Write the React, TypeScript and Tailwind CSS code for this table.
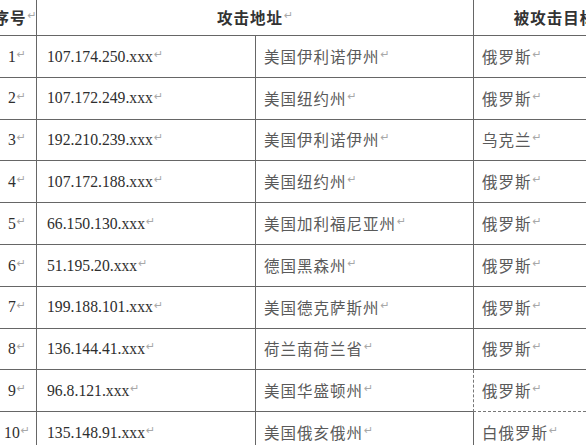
import React from "react";

const rows: [string, string, string, string][] = [
  ["1", "107.174.250.xxx", "美国伊利诺伊州", "俄罗斯"],
  ["2", "107.172.249.xxx", "美国纽约州", "俄罗斯"],
  ["3", "192.210.239.xxx", "美国伊利诺伊州", "乌克兰"],
  ["4", "107.172.188.xxx", "美国纽约州", "俄罗斯"],
  ["5", "66.150.130.xxx", "美国加利福尼亚州", "俄罗斯"],
  ["6", "51.195.20.xxx", "德国黑森州", "俄罗斯"],
  ["7", "199.188.101.xxx", "美国德克萨斯州", "俄罗斯"],
  ["8", "136.144.41.xxx", "荷兰南荷兰省", "俄罗斯"],
  ["9", "96.8.121.xxx", "美国华盛顿州", "俄罗斯"],
  ["10", "135.148.91.xxx", "美国俄亥俄州", "白俄罗斯"],
];

const Mark = () => (
  <span className="ml-[1px] text-[11px] leading-none text-[#a8a8a8] relative top-[-2px] [font-family:'DejaVu_Sans',sans-serif]">
    ↵
  </span>
);

const num = "[font-family:'Liberation_Serif','Noto_Sans_CJK_SC',serif] text-[15.7px] text-[#2e2e2e]";
const cjk = "[font-family:'Noto_Sans_CJK_SC',sans-serif] text-[15.5px] text-[#5a5a5a] tracking-[1px]";
const head = "[font-family:'Noto_Sans_CJK_SC',sans-serif] text-[15.5px] font-bold text-[#333] tracking-[1px]";

export default function App() {
  return (
    <div className="w-[586px] h-[445px] overflow-hidden bg-white">
      <div className="ml-[-6px] w-[652px] whitespace-nowrap">
        <div className="flex h-[36px] border-b border-[#666]">
          <div className="w-[43px] shrink-0 border-r border-[#666] flex items-center justify-center">
            <span className={head}>序号</span>
            <Mark />
          </div>
          <div className="w-[437px] shrink-0 border-r border-[#666] flex items-center justify-center">
            <span className={head}>攻击地址</span>
            <Mark />
          </div>
          <div className="flex-1 flex items-center justify-center">
            <span className={head}>被攻击目标</span>
            <Mark />
          </div>
        </div>
        {rows.map(([n, ip, loc, tgt], i) => (
          <div key={n} className="flex h-[41.8px]">
            <div className="w-[43px] shrink-0 border-r border-b border-[#666] flex items-center justify-center pl-[4px]">
              <span className={num}>{n}</span>
              <Mark />
            </div>
            <div className="w-[219px] shrink-0 border-r border-b border-[#666] flex items-center pl-[10px]">
              <span className={num}>{ip}</span>
              <Mark />
            </div>
            {i === 8 ? (
              <>
                <div className="w-[217px] shrink-0 border-b border-[#666] flex items-center pl-[8px]">
                  <span className={cjk}>{loc}</span>
                  <Mark />
                </div>
                <div className="flex-1 border-l border-b border-dashed border-[#777] flex items-center pl-[8px]">
                  <span className={cjk}>{tgt}</span>
                  <Mark />
                </div>
              </>
            ) : (
              <>
                <div className="w-[218px] shrink-0 border-r border-b border-[#666] flex items-center pl-[8px]">
                  <span className={cjk}>{loc}</span>
                  <Mark />
                </div>
                <div className="flex-1 border-b border-[#666] flex items-center pl-[8px]">
                  <span className={cjk}>{tgt}</span>
                  <Mark />
                </div>
              </>
            )}
          </div>
        ))}
      </div>
    </div>
  );
}
